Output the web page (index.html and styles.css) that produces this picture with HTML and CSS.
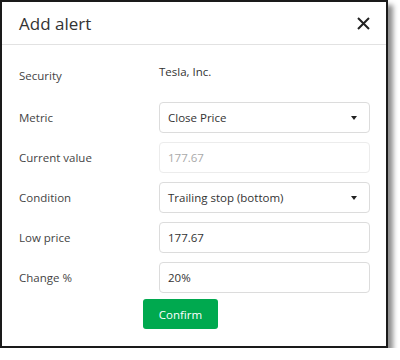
FILE: index.html
```html
<!DOCTYPE html>
<html lang="en">
<head>
    <meta charset="UTF-8">
    <meta name="viewport" content="width=device-width, initial-scale=1.0">
    <title>Add alert</title>
    <link rel="stylesheet" href="styles.css">
</head>
<body>

<div class="modal">
    <div class="modal-header">
        <h2>Add alert</h2>
        <button class="close" aria-label="Close">
            <svg width="13" height="13" viewBox="0 0 13 13">
                <path d="M1 1 L12 12 M12 1 L1 12" stroke="#222" stroke-width="2" fill="none"/>
            </svg>
        </button>
    </div>
    <div class="modal-body">
        <div class="form-row security">
            <label>Security</label>
            <span class="value">Tesla, Inc.</span>
        </div>
        <div class="form-row">
            <label for="metric">Metric</label>
            <div class="select" id="metric">Close Price<span class="caret"></span></div>
        </div>
        <div class="form-row">
            <label for="current">Current value</label>
            <input type="text" id="current" value="177.67" disabled>
        </div>
        <div class="form-row">
            <label for="condition">Condition</label>
            <div class="select" id="condition">Trailing stop (bottom)<span class="caret"></span></div>
        </div>
        <div class="form-row">
            <label for="lowPrice">Low price</label>
            <input type="text" id="lowPrice" value="177.67">
        </div>
        <div class="form-row">
            <label for="change">Change %</label>
            <input type="text" id="change" value="20%">
        </div>
        <button class="confirm">Confirm</button>
    </div>
</div>

</body>
</html>
```

FILE: styles.css
```css
body {
    margin: 0;
    background: #fff;
    font-family: "Open Sans", "Noto Sans", sans-serif;
    color: #333;
}
.modal {
    width: 384px;
    height: 344px;
    box-sizing: content-box;
    border: 2px solid #1a1a1a;
    background: #fff;
    box-shadow: 5px 5px 5px rgba(0, 0, 0, 0.45);
}
.modal-header {
    height: 42px;
    border-bottom: 1px solid #e2e2e2;
    display: flex;
    align-items: center;
    justify-content: space-between;
    padding: 0 16px 0 17px;
}
.modal-header h2 {
    margin: 0;
    font-size: 17px;
    font-weight: normal;
    color: #333;
}
.close {
    border: none;
    background: none;
    padding: 0;
    display: flex;
}
.modal-body {
    padding: 17px 16px 0 17px;
    display: flex;
    flex-direction: column;
    gap: 9px;
}
.form-row {
    display: grid;
    grid-template-columns: 140px 211px;
    align-items: center;
    height: 31px;
}
.form-row label {
    font-size: 11.5px;
    color: #444;
}
.security {
    align-items: start;
}
.security label {
    padding-top: 6px;
}
.security .value {
    font-size: 11.5px;
    padding-top: 2px;
    color: #333;
}
.select, input {
    height: 31px;
    box-sizing: border-box;
    border: 1px solid #dcdcdc;
    border-radius: 4px;
    padding: 0 12px 0 8px;
    font-family: inherit;
    font-size: 11.5px;
    color: #333;
    background: #fff;
}
.select {
    display: flex;
    align-items: center;
    justify-content: space-between;
}
.caret {
    width: 0;
    height: 0;
    border-left: 3.5px solid transparent;
    border-right: 3.5px solid transparent;
    border-top: 4px solid #222;
}
input:disabled {
    color: #aaa;
    border-color: #ececec;
}
.confirm {
    margin: -3px 0 0 124px;
    width: 75px;
    height: 30px;
    border: none;
    border-radius: 3px;
    background: #00a94f;
    color: #fff;
    font-family: inherit;
    font-size: 11.5px;
}
```
